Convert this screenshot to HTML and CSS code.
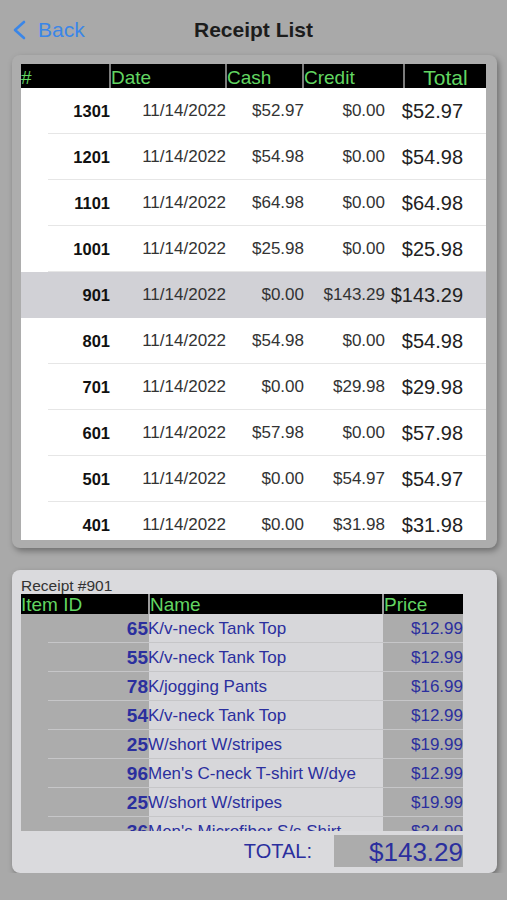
FILE: index.html
```html
<!DOCTYPE html>
<html lang="en">
<head>
  <meta charset="UTF-8" />
  <meta name="viewport" content="width=device-width, initial-scale=1" />
  <title>Receipt List</title>
  <link rel="stylesheet" href="styles.css">
</head>
<body>
  <div class="nav">
    <div class="back">
      <svg width="15" height="20" viewBox="0 0 15 20"><path d="M12 2 L3 10 L12 18" fill="none" stroke="#3a86e8" stroke-width="2.6" stroke-linecap="round" stroke-linejoin="round"/></svg>
      <span>Back</span>
    </div>
    <h1>Receipt List</h1>
  </div>

  <div class="card list-card">
    <div class="list-head">
      <div>#</div>
      <div>Date</div>
      <div>Cash</div>
      <div>Credit</div>
      <div class="center">Total</div>
    </div>
    <div class="list-body">
      <div class="row"><b>1301</b><span>11/14/2022</span><span>$52.97</span><span>$0.00</span><span class="tot">$52.97</span></div>
      <div class="row"><b>1201</b><span>11/14/2022</span><span>$54.98</span><span>$0.00</span><span class="tot">$54.98</span></div>
      <div class="row"><b>1101</b><span>11/14/2022</span><span>$64.98</span><span>$0.00</span><span class="tot">$64.98</span></div>
      <div class="row"><b>1001</b><span>11/14/2022</span><span>$25.98</span><span>$0.00</span><span class="tot">$25.98</span></div>
      <div class="row selected"><b>901</b><span>11/14/2022</span><span>$0.00</span><span>$143.29</span><span class="tot">$143.29</span></div>
      <div class="row"><b>801</b><span>11/14/2022</span><span>$54.98</span><span>$0.00</span><span class="tot">$54.98</span></div>
      <div class="row"><b>701</b><span>11/14/2022</span><span>$0.00</span><span>$29.98</span><span class="tot">$29.98</span></div>
      <div class="row"><b>601</b><span>11/14/2022</span><span>$57.98</span><span>$0.00</span><span class="tot">$57.98</span></div>
      <div class="row"><b>501</b><span>11/14/2022</span><span>$0.00</span><span>$54.97</span><span class="tot">$54.97</span></div>
      <div class="row"><b>401</b><span>11/14/2022</span><span>$0.00</span><span>$31.98</span><span class="tot">$31.98</span></div>
    </div>
  </div>

  <div class="card detail-card">
    <div class="caption">Receipt #901</div>
    <div class="item-head">
      <div>Item ID</div>
      <div>Name</div>
      <div>Price</div>
    </div>
    <div class="item-body">
      <div class="item"><b>65</b><span>K/v-neck Tank Top</span><span class="price">$12.99</span></div>
      <div class="item"><b>55</b><span>K/v-neck Tank Top</span><span class="price">$12.99</span></div>
      <div class="item"><b>78</b><span>K/jogging Pants</span><span class="price">$16.99</span></div>
      <div class="item"><b>54</b><span>K/v-neck Tank Top</span><span class="price">$12.99</span></div>
      <div class="item"><b>25</b><span>W/short W/stripes</span><span class="price">$19.99</span></div>
      <div class="item"><b>96</b><span>Men's C-neck T-shirt W/dye</span><span class="price">$12.99</span></div>
      <div class="item"><b>25</b><span>W/short W/stripes</span><span class="price">$19.99</span></div>
      <div class="item"><b>36</b><span>Men's Microfiber S/s Shirt</span><span class="price">$24.99</span></div>
    </div>
    <div class="total-row">
      <span class="total-label">TOTAL:</span>
      <span class="total-box">$143.29</span>
    </div>
  </div>
</body>
</html>
```

FILE: styles.css
```css
body {
  margin: 0;
  background: #a9a9a9;
  font-family: "Liberation Sans", Arial, sans-serif;
  color: #222;
}
.nav {
  height: 55px;
  display: flex;
  align-items: center;
  justify-content: center;
  position: relative;
}
.nav h1 {
  margin: 0;
  font-size: 21px;
  font-weight: bold;
  color: #1c1c1c;
  padding-top: 5px;
}
.back {
  position: absolute;
  left: 12px;
  top: 18px;
  display: flex;
  align-items: center;
  gap: 11px;
  color: #3a86e8;
  font-size: 21px;
}
.card {
  margin: 0 10px 0 12px;
  border-radius: 8px;
  box-shadow: 2px 3px 6px rgba(0,0,0,0.35);
}
.list-card {
  background: #adadad;
  padding: 9px 11px 8px 9px;
}
.list-head {
  display: grid;
  grid-template-columns: 88px 114px 75px 99px 81px;
  gap: 2px;
  background: #7c7c7c;
  height: 24px;
}
.list-head div, .item-head div {
  background: #000;
  color: #62d662;
  font-size: 19px;
  line-height: 27px;
  height: 24px;
  overflow: hidden;
}
.list-head .center {
  text-align: center;
  font-size: 21px;
}
.list-body {
  height: 452px;
  overflow: hidden;
  background: #fff;
}
.row {
  display: grid;
  grid-template-columns: 89px 116px 78px 81px 78px;
  height: 46px;
  align-items: center;
  text-align: right;
  font-size: 17px;
  color: #333;
  background: linear-gradient(#e6e6e6, #e6e6e6) no-repeat 27px 100% / calc(100% - 27px) 1px;
}
.row b {
  font-size: 16.5px;
  color: #111;
}
.row .tot {
  font-size: 20px;
  color: #222;
}
.row.selected {
  background: #d1d1d6;
}
.detail-card {
  margin-top: 22px;
  background: #dadadd;
  padding: 6px 34px 6px 9px;
}
.caption {
  font-size: 15.5px;
  color: #333;
  height: 18px;
  line-height: 20px;
}
.item-head {
  display: grid;
  grid-template-columns: 127px 232px 79px;
  gap: 2px;
  background: #9a9a9a;
  height: 20px;
}
.item-head div {
  height: 20px;
  line-height: 22px;
}
.item-body {
  height: 217px;
  overflow: hidden;
  background: linear-gradient(to right, #acacac 0 128px, #d7d7da 128px 362px, #acacac 362px);
}
.item {
  display: grid;
  grid-template-columns: 127px 234px 81px;
  height: 29px;
  align-items: center;
  color: #2b2f9e;
  font-size: 17px;
  white-space: nowrap;
  background: linear-gradient(#c6c6c8, #c6c6c8) no-repeat 27px 100% / calc(100% - 27px) 1px;
}
.item b {
  text-align: right;
  font-size: 19px;
}
.item span {
  overflow: hidden;
}
.item .price {
  text-align: right;
  font-size: 17px;
}
.total-row {
  display: flex;
  justify-content: flex-end;
  align-items: center;
  gap: 22px;
  margin-top: 4px;
}
.total-label {
  font-size: 20px;
  color: #2b2f9e;
}
.total-box {
  width: 129px;
  height: 32px;
  line-height: 34px;
  background: #acacac;
  color: #2b2f9e;
  font-size: 26px;
  text-align: right;
}
```
